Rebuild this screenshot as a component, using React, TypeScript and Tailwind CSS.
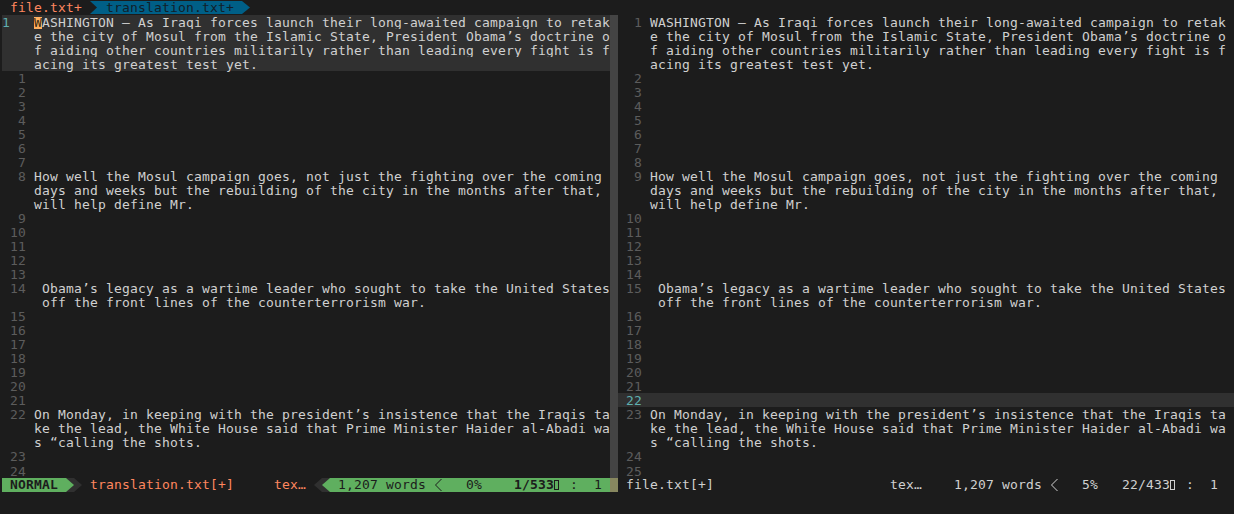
import React from "react";

type Row = { n: string; t: string; cur?: boolean; leftNum?: boolean; curNum?: boolean; cursor?: boolean };

const P1 = [
  "WASHINGTON — As Iraqi forces launch their long-awaited campaign to retak",
  "e the city of Mosul from the Islamic State, President Obama’s doctrine o",
  "f aiding other countries militarily rather than leading every fight is f",
  "acing its greatest test yet.",
];
const P2 = [
  "How well the Mosul campaign goes, not just the fighting over the coming",
  "days and weeks but the rebuilding of the city in the months after that,",
  "will help define Mr.",
];
const P3 = [
  " Obama’s legacy as a wartime leader who sought to take the United States",
  " off the front lines of the counterterrorism war.",
];
const P4 = [
  "On Monday, in keeping with the president’s insistence that the Iraqis ta",
  "ke the lead, the White House said that Prime Minister Haider al-Abadi wa",
  "s “calling the shots.",
];

function para(rows: Row[], n: string, lines: string[], extra: Partial<Row> = {}) {
  lines.forEach((t, i) => rows.push({ n: i === 0 ? n : "", t, ...extra }));
}

function buildLeft(): Row[] {
  const r: Row[] = [];
  P1.forEach((t, i) => r.push({ n: i === 0 ? "1" : "", t, cur: true, leftNum: true, curNum: true, cursor: i === 0 }));
  for (let i = 1; i <= 7; i++) r.push({ n: String(i), t: "" });
  para(r, "8", P2);
  for (let i = 9; i <= 13; i++) r.push({ n: String(i), t: "" });
  para(r, "14", P3);
  for (let i = 15; i <= 21; i++) r.push({ n: String(i), t: "" });
  para(r, "22", P4);
  r.push({ n: "23", t: "" });
  r.push({ n: "24", t: "" });
  return r;
}

function buildRight(): Row[] {
  const r: Row[] = [];
  para(r, "1", P1);
  for (let i = 2; i <= 8; i++) r.push({ n: String(i), t: "" });
  para(r, "9", P2);
  for (let i = 10; i <= 14; i++) r.push({ n: String(i), t: "" });
  para(r, "15", P3);
  for (let i = 16; i <= 22; i++) r.push({ n: String(i), t: "", cur: i === 22, curNum: i === 22 });
  para(r, "23", P4);
  r.push({ n: "24", t: "" });
  r.push({ n: "25", t: "" });
  return r;
}

function PaneRow({ row }: { row: Row }) {
  const num = row.leftNum ? row.n.padEnd(4, " ") : row.n.padStart(3, " ") + " ";
  return (
    <div className={`flex h-[14.03px] leading-[16px] whitespace-pre ${row.cur ? "bg-[#303030]" : ""}`}>
      <span className={row.curNum ? "text-[#5fafaf]" : "text-[#5c5c5c]"}>{num}</span>
      <span className="text-[#d0d0d0]">
        {row.cursor ? (
          <>
            <span className="relative inline-block">
              <span className="absolute left-0 top-[2px] w-[8px] h-[12px] bg-[#ffaf5f]" />
              <span className="relative text-[#3a2a10]">{row.t[0]}</span>
            </span>
            {row.t.slice(1)}
          </>
        ) : (
          row.t
        )}
      </span>
    </div>
  );
}

function TriRight({ fill, cls }: { fill: string; cls: string }) {
  return (
    <span className={`block w-[8px] shrink-0 ${cls}`}>
      <svg width="8" height="14" viewBox="0 0 8 14" className="block">
        <polygon points="0,0 8,7 0,14" fill={fill} />
      </svg>
    </span>
  );
}

function TriLeft({ fill, cls }: { fill: string; cls: string }) {
  return (
    <span className={`block w-[8px] shrink-0 ${cls}`}>
      <svg width="8" height="14" viewBox="0 0 8 14" className="block">
        <polygon points="8,0 0,7 8,14" fill={fill} />
      </svg>
    </span>
  );
}

function Chevron({ color }: { color: string }) {
  return (
    <span className="block w-[8px] h-[14px] shrink-0">
      <svg width="8" height="14" viewBox="0 0 8 14" className="block">
        <polyline points="7.5,1 1.5,7 7.5,13" fill="none" stroke={color} strokeWidth="1" />
      </svg>
    </span>
  );
}

function Box({ cls }: { cls: string }) {
  return (
    <span className="flex w-[8px] h-[14px] items-center shrink-0">
      <span className={`block w-[5px] h-[10px] border ${cls}`} />
    </span>
  );
}

export default function App() {
  const left = buildLeft();
  const right = buildRight();
  return (
    <div className="w-[1234px] h-[514px] overflow-hidden bg-[#1c1c1c] font-['DejaVu_Sans_Mono',monospace] text-[13px] tracking-[0.174px]">
      {/* tabline */}
      <div className="flex h-[15px] pl-[2px]">
        <span className="whitespace-pre leading-[16px] text-[#ff875f]"> file.txt+ </span>
        <span className="block w-[8px] h-[13px] mt-[1px] bg-[#005f87] shrink-0">
          <svg width="8" height="13" viewBox="0 0 8 13" className="block">
            <polygon points="0,0 7,6.5 0,13" fill="#1c1c1c" />
          </svg>
        </span>
        <span className="whitespace-pre h-[13px] mt-[1px] leading-[14px] bg-[#005f87] text-[#10202a]"> translation.txt+ </span>
        <span className="block w-[8px] h-[13px] mt-[1px] shrink-0">
          <svg width="8" height="13" viewBox="0 0 8 13" className="block">
            <polygon points="0,0 8,6.5 0,13" fill="#005f87" />
          </svg>
        </span>
      </div>

      {/* windows */}
      <div className="flex">
        <div className="w-[610px] pl-[2px] shrink-0 flex flex-col">
          {left.map((r, i) => (
            <PaneRow key={i} row={r} />
          ))}
        </div>
        <div className="w-[8px] shrink-0 bg-[#444444]" />
        <div className="flex-1 flex flex-col">
          {right.map((r, i) => (
            <PaneRow key={i} row={r} />
          ))}
        </div>
      </div>

      {/* status lines */}
      <div className="flex h-[14px] leading-[14px] whitespace-pre">
        <div className="w-[610px] pl-[2px] flex shrink-0">
          <span className="h-[14px] bg-[#5faf5f] text-[#1c1c1c] font-bold"> NORMAL </span>
          <TriRight fill="#5faf5f" cls="bg-[#303030]" />
          <TriRight fill="#303030" cls="" />
          <span className="h-[14px] text-[#ff875f]"> translation.txt[+]     tex… </span>
          <TriLeft fill="#303030" cls="" />
          <TriLeft fill="#5faf5f" cls="bg-[#303030]" />
          <div className="flex flex-1 h-[14px] bg-[#5faf5f] text-[#1c1c1c]">
            <span> 1,207 words </span>
            <Chevron color="#1c1c1c" />
            <span>   0%    </span>
            <span className="font-bold">1/533</span>
            <Box cls="border-[#1c1c1c]" />
            <span> :  1 </span>
          </div>
        </div>
        <div className="w-[8px] shrink-0 bg-[#87875f]" />
        <div className="flex flex-1 h-[14px] text-[#d0d0d0]">
          <span> file.txt[+]                      tex… </span>
          <span>   </span>
          <span>1,207 words </span>
          <Chevron color="#d0d0d0" />
          <span>   5%   </span>
          <span>22/433</span>
          <Box cls="border-[#d0d0d0]" />
          <span> :  1 </span>
        </div>
      </div>
    </div>
  );
}
